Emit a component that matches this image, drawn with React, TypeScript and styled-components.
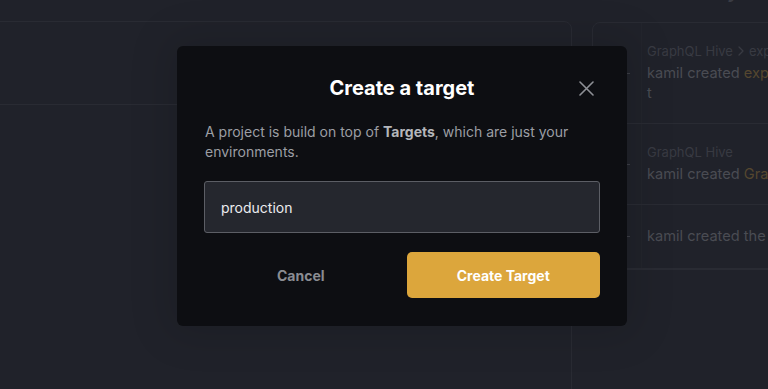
import React from "react";
import styled, { createGlobalStyle } from "styled-components";

const GlobalStyle = createGlobalStyle`
  * { box-sizing: border-box; }
  html, body { margin: 0; padding: 0; background: #20222a; }
  body { font-family: Inter, "Noto Sans", "Liberation Sans", sans-serif; -webkit-font-smoothing: antialiased; }
`;

const Page = styled.div`
  position: relative;
  width: 768px;
  height: 389px;
  overflow: hidden;
  background: #20222a;
`;

const Dashboard = styled.div`
  display: flex;
  gap: 20px;
  align-items: flex-start;
`;

const LeftCard = styled.div`
  flex-shrink: 0;
  margin-left: -12px;
  margin-top: 21px;
  width: 584px;
  height: 420px;
  border: 1px solid #292b33;
  border-radius: 8px;
  display: flex;
  flex-direction: column;
`;

const LeftCardHeader = styled.div`
  height: 83px;
  border-bottom: 1px solid #292b33;
`;

const RightColumn = styled.div`
  display: flex;
  flex-direction: column;
  width: 280px;
  flex-shrink: 0;
`;

const ColumnHeading = styled.h2`
  margin: -21px 0 0 0;
  height: 24px;
  font-size: 20px;
  line-height: 24px;
  font-weight: 600;
  color: #3a3c44;
  white-space: nowrap;
`;

const ActivityCard = styled.div`
  margin-top: 19px;
  border: 1px solid #292b33;
  border-radius: 8px;
  display: flex;
  flex-direction: column;
`;

const ActivityRow = styled.div`
  display: flex;
  min-height: 64px;
  border-bottom: 1px solid #292b33;
`;

const ActivityIcon = styled.div`
  width: 49px;
  flex-shrink: 0;
  display: flex;
  align-items: center;
  justify-content: flex-end;
  padding-right: 11px;
  border-right: 1px solid #23252d;
`;

const Tick = styled.span`
  display: block;
  width: 4px;
  height: 1px;
  background: #3c3e46;
`;

const ActivityBody = styled.div`
  padding: 19px 0 20px 5px;
  display: flex;
  flex-direction: column;
  justify-content: center;
  gap: 3px;
  white-space: nowrap;
`;

const Crumb = styled.div`
  display: flex;
  align-items: center;
  gap: 4px;
  font-size: 13px;
  line-height: 18px;
  color: #383a42;
`;

const Message = styled.div`
  font-size: 14.6px;
  line-height: 20px;
  color: #4a4c53;
`;

const Accent = styled.span`
  color: #55472f;
`;

const Overlay = styled.div`
  position: absolute;
  inset: 0;
  display: flex;
  align-items: flex-start;
  padding: 46px 0 0 177px;
`;

const Modal = styled.div`
  width: 450px;
  background: #0d0e12;
  border-radius: 6px;
  padding: 28px 27px 28px 27px;
  display: flex;
  flex-direction: column;
  box-shadow: 0 0 40px 10px rgba(0, 0, 0, 0.12);
`;

const ModalHeader = styled.div`
  position: relative;
  display: flex;
  justify-content: center;
  align-items: center;
  height: 28px;
`;

const Title = styled.h1`
  margin: 0;
  font-size: 20px;
  line-height: 28px;
  font-weight: 700;
  color: #ffffff;
`;

const CloseButton = styled.button`
  position: absolute;
  right: 6px;
  top: 6px;
  width: 16px;
  height: 16px;
  padding: 0;
  border: 0;
  background: transparent;
  display: flex;
  align-items: center;
  justify-content: center;
  cursor: pointer;
`;

const Description = styled.p`
  margin: 20px 0 0 1px;
  font-size: 14px;
  line-height: 20px;
  color: #9c9ea4;
  b { color: #b4b6bb; font-weight: 700; }
`;

const TextInput = styled.input`
  margin-top: 19px;
  width: 396px;
  height: 52px;
  border: 1px solid #5c5e65;
  border-radius: 3px;
  background: #25272e;
  padding: 0 16px;
  font-family: inherit;
  font-size: 14px;
  color: #ececee;
  outline: none;
`;

const Actions = styled.div`
  margin-top: 19px;
  display: grid;
  grid-template-columns: 1fr 1fr;
  gap: 9px;
`;

const Button = styled.button<{ $primary?: boolean }>`
  height: 46px;
  border: 0;
  border-radius: 5px;
  font-family: inherit;
  font-size: 14px;
  font-weight: 700;
  cursor: pointer;
  background: ${(p) => (p.$primary ? "#dca63c" : "transparent")};
  color: ${(p) => (p.$primary ? "#ffffff" : "#8a8c92")};
`;

const Chevron = () => (
  <svg width="8" height="10" viewBox="0 0 8 10" fill="none">
    <path d="M2 1L6 5L2 9" stroke="#383a42" strokeWidth="1.3" strokeLinecap="round" strokeLinejoin="round" />
  </svg>
);

export default function App() {
  return (
    <Page>
      <GlobalStyle />
      <Dashboard>
        <LeftCard>
          <LeftCardHeader />
        </LeftCard>
        <RightColumn>
          <ColumnHeading>Recent Activity</ColumnHeading>
          <ActivityCard>
            <ActivityRow>
              <ActivityIcon><Tick /></ActivityIcon>
              <ActivityBody>
                <Crumb>
                  GraphQL Hive <Chevron /> experiments
                </Crumb>
                <Message>
                  kamil created <Accent>experimen</Accent>
                  <br />t
                </Message>
              </ActivityBody>
            </ActivityRow>
            <ActivityRow>
              <ActivityIcon><Tick /></ActivityIcon>
              <ActivityBody>
                <Crumb>GraphQL Hive</Crumb>
                <Message>
                  kamil created <Accent>GraphQL Hive</Accent>
                </Message>
              </ActivityBody>
            </ActivityRow>
            <ActivityRow>
              <ActivityIcon><Tick /></ActivityIcon>
              <ActivityBody>
                <Message>kamil created the organization</Message>
              </ActivityBody>
            </ActivityRow>
          </ActivityCard>
        </RightColumn>
      </Dashboard>
      <Overlay>
        <Modal>
          <ModalHeader>
            <Title>Create a target</Title>
            <CloseButton aria-label="Close">
              <svg width="15" height="15" viewBox="0 0 15 15" fill="none">
                <path d="M1 1L14 14M14 1L1 14" stroke="#8e9096" strokeWidth="1.6" strokeLinecap="round" />
              </svg>
            </CloseButton>
          </ModalHeader>
          <Description>
            A project is build on top of <b>Targets</b>, which are just your environments.
          </Description>
          <TextInput defaultValue="production" />
          <Actions>
            <Button>Cancel</Button>
            <Button $primary>Create Target</Button>
          </Actions>
        </Modal>
      </Overlay>
    </Page>
  );
}
